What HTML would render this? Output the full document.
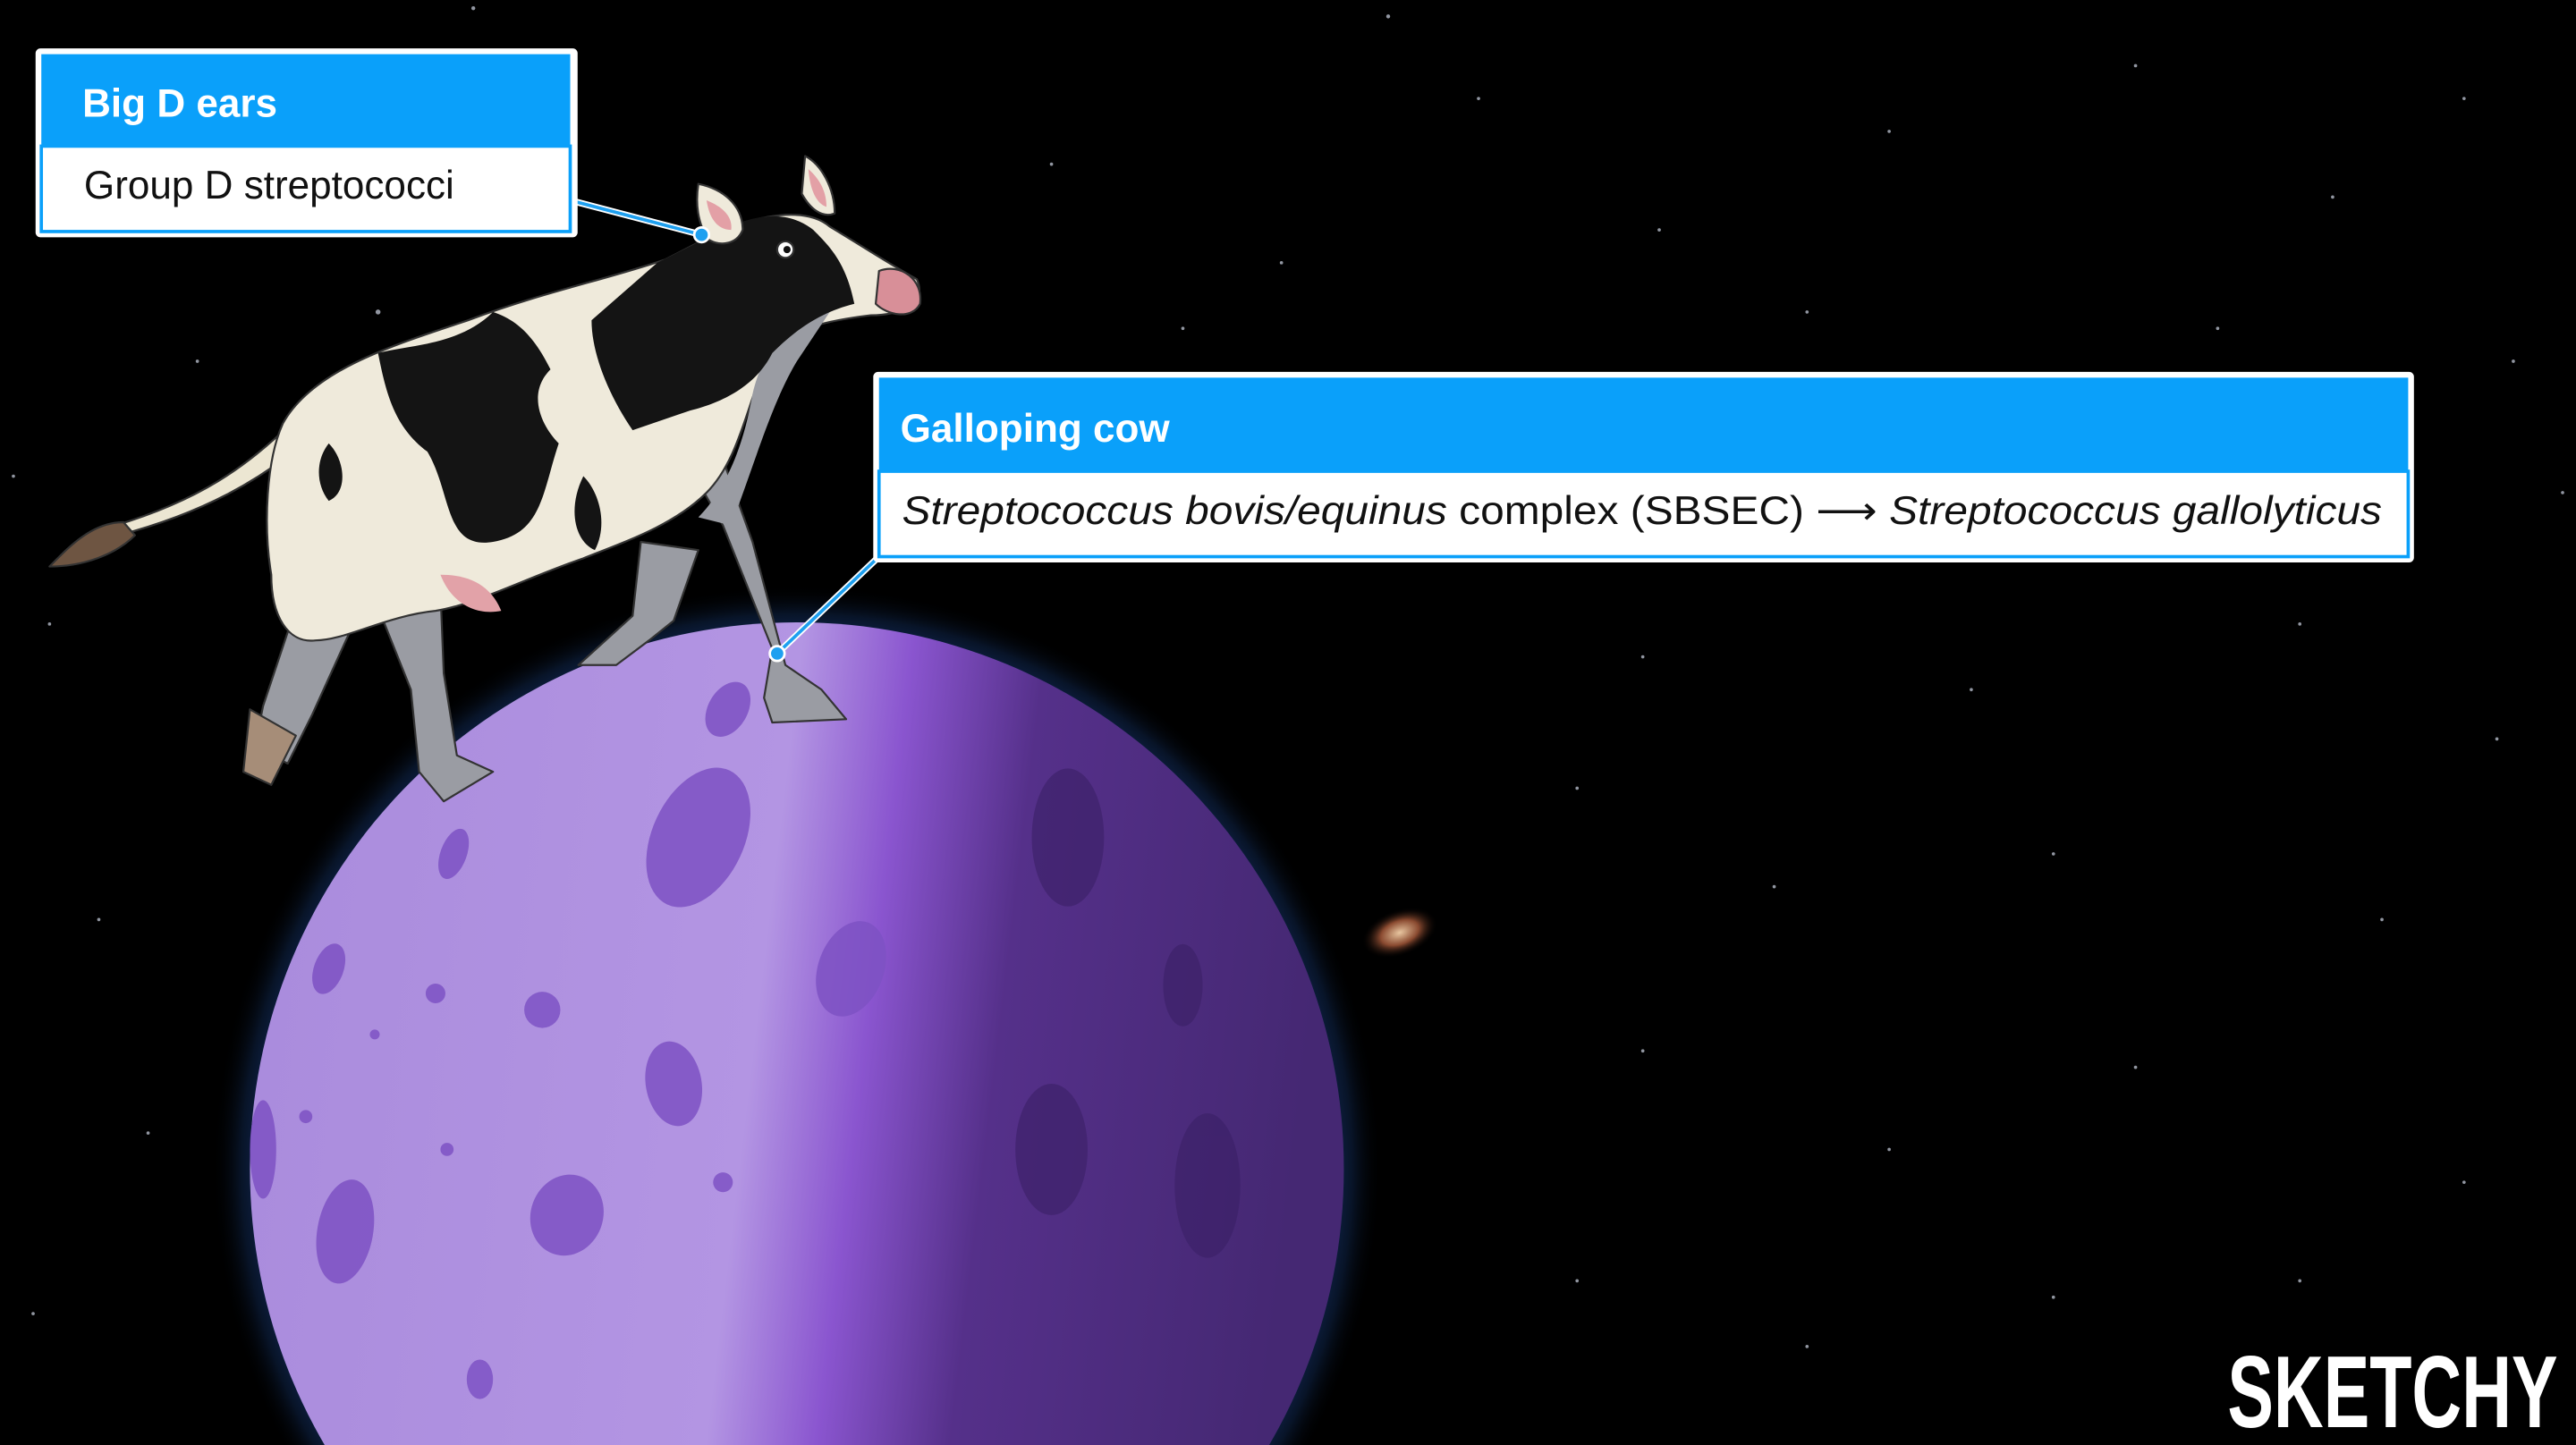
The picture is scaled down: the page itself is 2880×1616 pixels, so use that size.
<!DOCTYPE html>
<html><head><meta charset="utf-8">
<style>
html,body{margin:0;padding:0;background:#000;overflow:hidden;}
body{width:2880px;height:1616px;}
svg{display:block}
</style></head>
<body>
<svg width="2880" height="1616" viewBox="0 0 1568 880" xmlns="http://www.w3.org/2000/svg">
<defs>
<linearGradient id="pl" x1="0" y1="0" x2="1" y2="0.12">
<stop offset="0" stop-color="#a98bdc"/>
<stop offset="0.5" stop-color="#b395e3"/>
<stop offset="0.6" stop-color="#8a55cf"/>
<stop offset="0.72" stop-color="#55308a"/>
<stop offset="1" stop-color="#452873"/>
</linearGradient>
<radialGradient id="glow" cx="0.5" cy="0.5" r="0.5">
<stop offset="0.88" stop-color="#1b3f8a" stop-opacity="0.9"/>
<stop offset="0.95" stop-color="#102850" stop-opacity="0.5"/>
<stop offset="1" stop-color="#000" stop-opacity="0"/>
</radialGradient>
<radialGradient id="gal" cx="0.5" cy="0.5" r="0.5">
<stop offset="0" stop-color="#e8c6a0"/>
<stop offset="0.5" stop-color="#8a4a30"/>
<stop offset="1" stop-color="#000" stop-opacity="0"/>
</radialGradient>
</defs>
<rect width="1568" height="880" fill="#000"/>
<g fill="#cfd6e6" opacity="0.7">
<circle cx="288" cy="5" r="1.2"/><circle cx="845" cy="10" r="1.2"/><circle cx="640" cy="100" r="1"/>
<circle cx="900" cy="60" r="1"/><circle cx="1010" cy="140" r="1"/><circle cx="1150" cy="80" r="1"/>
<circle cx="1300" cy="40" r="1"/><circle cx="1420" cy="120" r="1"/><circle cx="1500" cy="60" r="1"/>
<circle cx="720" cy="200" r="1"/><circle cx="1100" cy="190" r="1"/><circle cx="1350" cy="200" r="1"/>
<circle cx="1530" cy="220" r="1"/><circle cx="1000" cy="400" r="1"/><circle cx="1200" cy="420" r="1"/>
<circle cx="1400" cy="380" r="1"/><circle cx="1520" cy="450" r="1"/><circle cx="960" cy="480" r="1"/>
<circle cx="1080" cy="540" r="1"/><circle cx="1250" cy="520" r="1"/><circle cx="1450" cy="560" r="1"/>
<circle cx="1000" cy="640" r="1"/><circle cx="1150" cy="700" r="1"/><circle cx="1300" cy="650" r="1"/>
<circle cx="1500" cy="720" r="1"/><circle cx="960" cy="780" r="1"/><circle cx="1100" cy="820" r="1"/>
<circle cx="1250" cy="790" r="1"/><circle cx="1400" cy="780" r="1"/><circle cx="30" cy="380" r="1"/>
<circle cx="60" cy="560" r="1"/><circle cx="90" cy="690" r="1"/><circle cx="20" cy="800" r="1"/>
<circle cx="120" cy="220" r="1"/><circle cx="230" cy="190" r="1.5"/><circle cx="8" cy="290" r="1"/>
<circle cx="1560" cy="300" r="1"/><circle cx="870" cy="300" r="1"/><circle cx="780" cy="160" r="1"/>
</g>
<ellipse cx="852" cy="568" rx="24" ry="14" fill="url(#gal)" transform="rotate(-20 852 568)"/>
<circle cx="485" cy="712" r="356" fill="url(#glow)"/>
<circle cx="485" cy="712" r="333" fill="url(#pl)"/>
<g fill="#7e52c4" opacity="0.85">
<ellipse cx="425" cy="510" rx="28" ry="45" transform="rotate(25 425 510)"/>
<ellipse cx="443" cy="432" rx="12" ry="18" transform="rotate(30 443 432)"/>
<ellipse cx="276" cy="520" rx="8" ry="16" transform="rotate(20 276 520)"/>
<ellipse cx="518" cy="590" rx="20" ry="30" transform="rotate(20 518 590)"/>
<ellipse cx="410" cy="660" rx="17" ry="26" transform="rotate(-10 410 660)"/>
<ellipse cx="345" cy="740" rx="22" ry="25" transform="rotate(20 345 740)"/>
<ellipse cx="210" cy="750" rx="17" ry="32" transform="rotate(10 210 750)"/>
<ellipse cx="200" cy="590" rx="9" ry="16" transform="rotate(20 200 590)"/>
<ellipse cx="160" cy="700" rx="8" ry="30"/>
<ellipse cx="292" cy="840" rx="8" ry="12"/>
<circle cx="265" cy="605" r="6"/><circle cx="330" cy="615" r="11"/><circle cx="440" cy="720" r="6"/>
<circle cx="186" cy="680" r="4"/><circle cx="228" cy="630" r="3"/><circle cx="272" cy="700" r="4"/>
</g>
<g fill="#3a2066" opacity="0.6">
<ellipse cx="650" cy="510" rx="22" ry="42"/><ellipse cx="640" cy="700" rx="22" ry="40"/>
<ellipse cx="735" cy="722" rx="20" ry="44"/><ellipse cx="720" cy="600" rx="12" ry="25"/>
</g>
<g stroke="#333" stroke-width="1.2" stroke-linejoin="round">
<path d="M180,255 C150,285 120,305 70,320 L72,326 C125,312 158,292 185,270 Z" fill="#ece6d2"/>
<path d="M75,318 C55,318 40,335 30,345 C50,345 70,338 82,326 Z" fill="#6e5542"/>
<path d="M180,370 L160,430 L155,455 L175,465 L190,435 L215,380 Z" fill="#9a9ca3"/>
<path d="M152,432 L148,470 L165,478 L180,448 Z" fill="#a68d78"/>
<path d="M228,365 L250,420 L255,470 L270,488 L300,470 L278,460 L270,410 L268,360 Z" fill="#9a9ca3"/>
<path d="M390,330 L385,375 L352,405 L375,405 L395,390 L410,378 L425,335 Z" fill="#9a9ca3"/>
<path d="M420,285 L440,320 L470,395 L465,425 L470,440 L515,438 L500,420 L478,405 L458,330 L440,280 Z" fill="#9a9ca3"/>
<path d="M172,258 C190,225 240,210 285,195 C330,178 370,170 405,158 L440,140 C460,132 490,125 505,138 C525,150 540,160 558,170 C565,185 548,192 530,192 C505,195 480,200 468,215 C455,245 450,280 430,300 C410,320 380,330 355,340 C320,352 290,368 265,372 C235,375 210,390 192,390 C175,392 165,375 165,350 C160,320 162,280 172,258 Z" fill="#efeadb"/>
<path d="M505,190 C480,198 465,210 458,240 C452,275 440,300 425,315 L445,320 C460,280 470,245 485,220 Z" fill="#9a9ca3" stroke="none"/>
<path d="M440,140 C460,130 480,128 495,140 C505,150 515,160 520,185 C500,190 485,200 470,215 C460,235 440,245 420,250 L385,262 C370,240 360,215 360,195 L400,160 Z" fill="#141414" stroke="none"/>
<path d="M300,190 C280,210 250,210 230,215 C235,240 240,260 260,275 C275,300 270,335 300,330 C330,325 330,300 340,270 C330,260 320,240 335,225 C325,205 315,195 300,190 Z" fill="#141414" stroke="none"/>
<path d="M355,290 C365,300 370,320 362,335 C350,330 345,310 355,290 Z" fill="#141414" stroke="none"/>
<path d="M200,270 C210,280 212,300 200,305 C192,295 192,280 200,270 Z" fill="#141414" stroke="none"/>
<path d="M268,350 C275,368 290,375 305,372 C300,360 290,350 268,350 Z" fill="#e2a2a8" stroke="none"/>
<path d="M425,112 C440,115 452,125 452,140 C448,150 436,150 430,145 C425,135 423,125 425,112 Z" fill="#efeadb"/>
<path d="M430,122 C440,126 446,132 445,140 C438,140 432,135 430,122 Z" fill="#e3a0a6" stroke="none"/>
<path d="M490,95 C500,100 508,115 508,130 C500,133 493,127 488,118 Z" fill="#efeadb"/>
<path d="M492,103 C500,110 503,118 503,126 C497,124 493,116 492,103 Z" fill="#e3a0a6" stroke="none"/>
<path d="M535,165 C548,160 562,170 560,185 C555,195 540,192 533,185 Z" fill="#d88f98"/>
<circle cx="478" cy="152" r="5" fill="#fff"/><circle cx="479" cy="152" r="2.2" fill="#111" stroke="none"/>
</g>
<g stroke="#fff" stroke-width="4" fill="none"><line x1="347" y1="122" x2="427" y2="143"/><line x1="536" y1="338" x2="473" y2="398"/></g>
<g stroke="#1ea0f0" stroke-width="2" fill="none"><line x1="347" y1="122" x2="427" y2="143"/><line x1="536" y1="338" x2="473" y2="398"/></g>
<circle cx="427" cy="143" r="4.5" fill="#1ea0f0" stroke="#fff" stroke-width="1.5"/>
<circle cx="473" cy="398" r="4.5" fill="#1ea0f0" stroke="#fff" stroke-width="1.5"/>
<rect x="21.5" y="29.5" width="330" height="115" rx="3" fill="#fff"/>
<rect x="25" y="33" width="322" height="56" fill="#0aa0fa"/>
<rect x="25" y="89" width="322" height="52" fill="none" stroke="#0aa0fa" stroke-width="2"/>
<text x="50" y="71" font-family="Liberation Sans, sans-serif" font-size="24" font-weight="bold" fill="#fff">Big D ears</text>
<text x="51" y="121" font-family="Liberation Sans, sans-serif" font-size="24" fill="#111">Group D streptococci</text>
<rect x="531.5" y="226.5" width="938" height="116" rx="3" fill="#fff"/>
<rect x="535" y="230" width="931" height="57" fill="#0aa0fa"/>
<rect x="535" y="287" width="931" height="52" fill="none" stroke="#0aa0fa" stroke-width="2"/>
<text x="548" y="269" font-family="Liberation Sans, sans-serif" font-size="24" font-weight="bold" fill="#fff">Galloping cow</text>
<text x="549" y="319" font-family="Liberation Sans, sans-serif" font-size="24" fill="#111" textLength="901" lengthAdjust="spacingAndGlyphs"><tspan font-style="italic">Streptococcus bovis/equinus</tspan> complex (SBSEC) ⟶ <tspan font-style="italic">Streptococcus gallolyticus</tspan></text>
<text x="1356" y="869" font-family="Liberation Sans Narrow, Liberation Sans, sans-serif" font-size="62" font-weight="bold" fill="#fff" textLength="201" lengthAdjust="spacingAndGlyphs">SKETCHY</text>
</svg>
</body></html>
